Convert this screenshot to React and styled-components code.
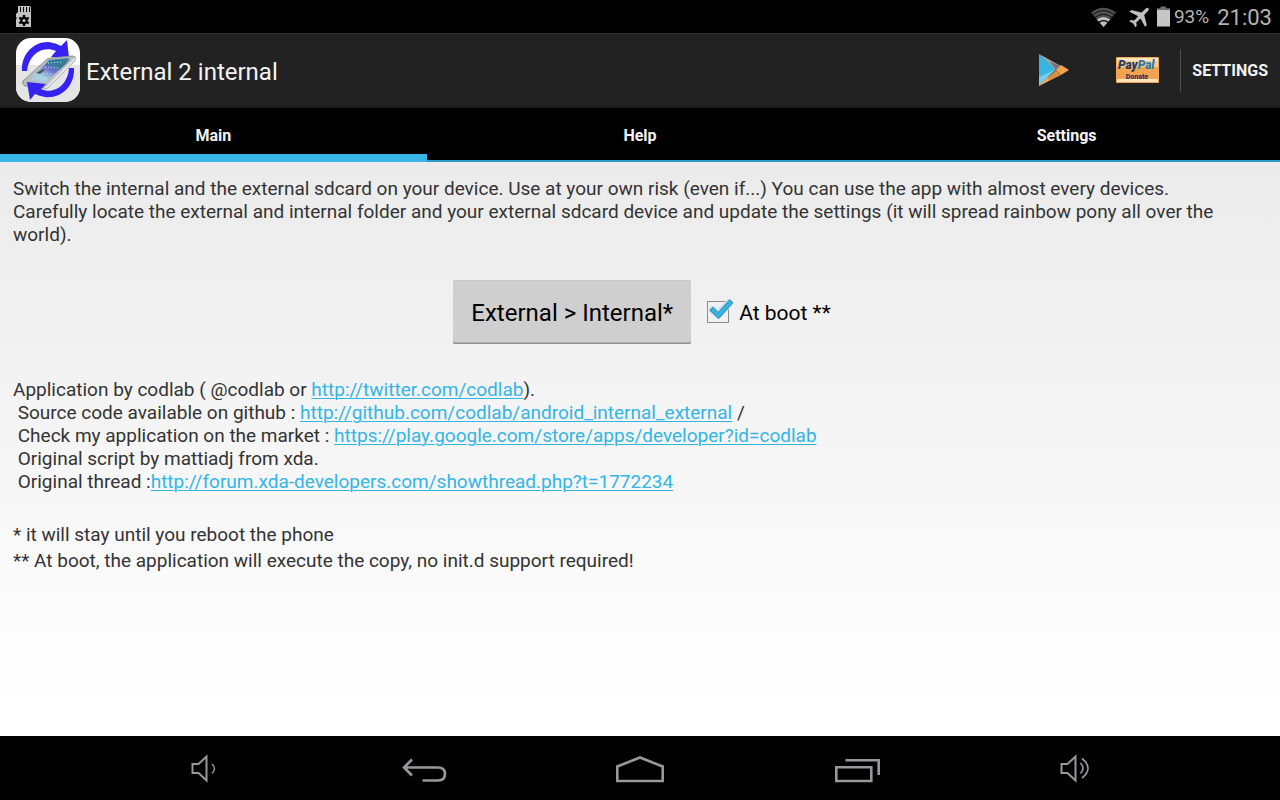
import React, { useState } from "react";
import styled, { createGlobalStyle } from "styled-components";

const GlobalStyle = createGlobalStyle`
  * { box-sizing: border-box; }
  body { margin: 0; background: #000; font-family: Roboto, "Liberation Sans", sans-serif; }
  button { font-family: inherit; border: 0; margin: 0; cursor: pointer; }
`;

const Screen = styled.div`
  display: flex;
  flex-direction: column;
  min-height: 100vh;
`;

const StatusBar = styled.header`
  display: flex;
  align-items: center;
  justify-content: space-between;
  height: 33px;
  padding: 0 8px 0 16px;
  background: #000;
  color: #b4b4b4;
`;

const StatusGroup = styled.div`
  display: flex;
  align-items: center;
`;

const Icon = styled.svg`
  display: block;
  flex: none;
`;

const Battery = styled.span`
  font-size: 19px;
  line-height: 33px;
  padding-left: 3px;
`;

const Clock = styled.time`
  font-size: 22px;
  line-height: 34px;
  padding: 2px 0 0 8px;
`;

const ActionBar = styled.div`
  display: flex;
  align-items: center;
  height: 75px;
  padding-left: 16px;
  background: #222;
  border-top: 1px solid #303030;
  border-bottom: 2px solid #1a1a1a;
`;

const Title = styled.h1`
  flex: 1;
  margin: 0;
  padding: 4px 0 0 6px;
  font-size: 24px;
  font-weight: 400;
  line-height: 32px;
  color: #f3f3f3;
`;

const Action = styled.button`
  display: flex;
  align-items: center;
  justify-content: center;
  width: 84px;
  height: 64px;
  padding: 0;
  background: none;
`;

const SettingsAction = styled.button`
  height: 43px;
  padding: 0 12px 0 11px;
  background: none;
  border-left: 1px solid #505050;
  color: #f3f3f3;
  font-size: 16px;
  font-weight: 700;
`;

const Tabs = styled.nav`
  display: grid;
  grid-template-columns: repeat(3, 1fr);
  height: 54px;
  background: #000;
`;

const Tab = styled.button`
  padding: ${(p) => (p.$active ? "9px 0 0" : "3px 0 0")};
  background: #000;
  border-bottom: ${(p) => (p.$active ? "8px solid #39b6e6" : "2px solid #2f9cc6")};
  color: #f3f3f3;
  font-size: 16px;
  font-weight: 700;
  line-height: 20px;
`;

const Content = styled.main`
  flex: 1;
  padding: 15px 13px;
  background: linear-gradient(#ebebeb, #fff 96%);
  color: #333;
  font-size: 19px;
  line-height: 23px;
`;

const Paragraph = styled.p`
  margin: 0;
`;

const Controls = styled.div`
  display: flex;
  align-items: center;
  justify-content: center;
  gap: 16px;
  padding: 34px 0 34px 4px;
`;

const SwapButton = styled.button`
  height: 64px;
  padding: 2px 18px 0;
  border-radius: 2px;
  background: #cfcfcf;
  box-shadow: inset 0 1px #c6c6c6, inset 0 -1px #8f8f8f, inset 0 -2px #b4b4b4;
  color: #000;
  font-size: 24px;
`;

const BootLabel = styled.label`
  display: flex;
  align-items: center;
  gap: 6px;
  padding-top: 2px;
  color: #000;
  font-size: 21px;
  line-height: 28px;
`;

const CheckHolder = styled.span`
  display: grid;
  width: 26px;
  height: 28px;
  & > * { grid-area: 1 / 1; }
  & > svg { pointer-events: none; z-index: 1; }
`;

const CheckInput = styled.input`
  appearance: none;
  width: 22px;
  height: 22px;
  margin: 2px 0 0;
  border: 1px solid #8c8c8c;
  background: #f1f1f1;
`;

const Credits = styled.div`
  margin: 0 0 30px;
`;

const CreditLine = styled.p`
  margin: 0;
  white-space: pre-wrap;
`;

const Link = styled.a`
  color: #33b5e5;
  text-decoration: underline;
  text-decoration-thickness: 1px;
  text-underline-offset: 2px;
`;

const Note = styled.p`
  margin: 0 0 3px;
`;

const NavBar = styled.footer`
  display: grid;
  grid-template-columns: repeat(5, 1fr);
  height: 64px;
  padding: 0 98px;
  background: #000;
`;

const NavButton = styled.button`
  display: flex;
  align-items: center;
  justify-content: center;
  padding: 0;
  background: none;
`;

function SdCardIcon() {
  return (
    <Icon width="16" height="22" viewBox="0 0 16 22">
      <path fill="#c2c2c2" d="M2 0h12l1 1v20H0V13l1-1-1-1V8l2-2z" />
      <path stroke="#000" strokeWidth="1" d="M4.500 1v5M7.500 1v5M10.500 1v5M13.500 1v5" />
      <g stroke="#000" strokeWidth="2.400">
        <path d="M8 9v11M3.300 11.800l9.400 5.400M3.300 17.200l9.400-5.400" />
      </g>
      <circle cx="8" cy="14.500" r="3.700" fill="#000" />
      <circle cx="8" cy="14.500" r="1.600" fill="#c2c2c2" />
    </Icon>
  );
}

function StatusIcons() {
  return (
    <Icon width="80" height="22" viewBox="1093 4 80 22">
      <path fill="#505050" d="M1105.500 25L1093 10.500Q1105.500 1 1118 10.500z" />
      <g fill="none" stroke="#000" strokeWidth=".8">
        <path d="M1094.500 12.800q11-8.500 22 0M1097 15.500q8.500-6.500 17 0" />
      </g>
      <path fill="#c0c0c0" d="M1105.500 25l-6.600-7.600q6.600-5 13.200 0z" />
      <path fill="none" stroke="#000" strokeWidth="1.200" d="M1100.500 20.600q5-3.800 10 0" />
      <path fill="#c0c0c0" d="M1150.500 6.200q1 1-.5 2.800l-3.800 4 2.600 10.200-1.800 1.600-4.500-8.400-4.200 4 .4 3.600-1.300 1.200-2.200-3.700-3.900-2.200 1.200-1.300 3.700.4 4-4.200-8.700-4.400 1.700-1.800 10.300 2.500 4-3.800q2-1.500 3-.5z" />
      <path fill="#707070" d="M1162.500 4.500h5.500v1.800h4V9h-13V6.300h3.500z" />
      <path fill="#c5c7c5" d="M1159 8h13v16.500h-13z" />
    </Icon>
  );
}

function AppLogo() {
  return (
    <Icon width="64" height="64" viewBox="0 0 64 64" aria-hidden="true">
      <defs>
        <linearGradient id="phone" x1="0" y1="1" x2="1" y2="0">
          <stop offset="0" stopColor="#a9bcc6" />
          <stop offset=".3" stopColor="#a5d3e2" />
          <stop offset=".55" stopColor="#6e70cf" />
          <stop offset=".75" stopColor="#2d7894" />
          <stop offset="1" stopColor="#5f7f8c" />
        </linearGradient>
      </defs>
      <rect width="64" height="64" rx="15" fill="#fff" />
      <path fill="#e5e5e5" d="M0 27h64v22a15 15 0 0 1-15 15H15A15 15 0 0 1 0 49z" />
      <path fill="#3423f1" d="M6 33C5 14 20 3 33 4q7 1 12 4l6-6 2 18-18-1 5-6C26 7 13 16 11 33z" />
      <path fill="#b9bcbe" stroke="#8c9296" strokeWidth="1" d="M7 43l23-21q2-2 5-2l22-2q4 1 2 5L33 49q-2 2-5 1l-19-2q-4-2-2-5z" />
      <path fill="#dfe1e2" d="M28 50l30-30q3 0 1 3L33 49q-2 2-5 1z" />
      <path fill="url(#phone)" d="M12 42l20-18 22-3-4 5-22 19z" />
      <path fill="#347f9f" d="M33 22l20-2-5 6-19 1z" />
      <path fill="none" stroke="#c9e6ef" strokeWidth="1" strokeDasharray="1 2" d="M16 41l12-1M22 35l14 1M29 29l15 1M32 25l15-1M25 43l9-5" />
      <path fill="#4c5960" d="M20 35l7-4 2 1-5 4z" />
      <path fill="#3423f1" d="M58 30c1 19-14 31-29 29q-6-1-10-3l-5 6-3-18 19 2-5 5c13 6 27-4 28-21z" />
    </Icon>
  );
}

function PlayIcon() {
  return (
    <Icon width="32" height="34" viewBox="0 0 32 34" aria-hidden="true">
      <path fill="#39b3e2" d="M1 1v32l17-17z" />
      <path fill="#76cbe8" d="M1 24v9l17-17z" />
      <path fill="#a5aaae" d="M1 1l22 12-5 4z" />
      <path fill="#777" d="M11 8l12 5-5 4z" />
      <path fill="#f5a34e" d="M23 12l8 5-8 5-5-5z" />
      <path fill="#d78e45" d="M1 33l17-16 5 5z" />
      <path fill="#f4a953" d="M1 33l8-8 3 2z" />
    </Icon>
  );
}

function DonateIcon() {
  return (
    <Icon width="44" height="26" viewBox="0 0 44 26">
      <rect width="43" height="26" rx="1" fill="#f3a451" />
      <path fill="#fbe3bc" d="M1 1h41v3H1zM1 22h41v3H1z" />
      <path fill="#f8cb94" d="M1 4h41v6H1z" />
      <text x="2" y="12" fontSize="12" fontWeight="900" fontStyle="italic" fontFamily="Roboto, sans-serif" fill="#253b64">
        Pay<tspan fill="#287ba5">Pal</tspan>
      </text>
      <text x="21" y="22" textAnchor="middle" fontSize="7" fontWeight="900" fontFamily="Roboto, sans-serif" fill="#293657">
        Donate
      </text>
    </Icon>
  );
}

const navIcons = [
  {
    label: "Volume down",
    body: (
      <g strokeWidth="2">
        <path d="M18.500 28h6l8-7.500v24L24.500 37h-6z" />
        <path strokeWidth="1.500" d="M38 28q5 4.500 0 9.500" />
      </g>
    ),
  },
  {
    label: "Back",
    body: <path strokeWidth="2.600" d="M21 23.500l-8 8 8 8M13 31.500h34q7 0 7 6.500t-7 6.500H31.500" />,
  },
  {
    label: "Home",
    body: <path strokeWidth="2.600" d="M9.300 45V30.500L32 21.500l22.700 9V45z" />,
  },
  {
    label: "Recent apps",
    body: <path strokeWidth="2.600" d="M11.300 31.300h35V45h-35zM20.500 24.300h33.200V39" />,
  },
  {
    label: "Volume up",
    body: (
      <g strokeWidth="2">
        <path d="M19.500 28h6l8-7.500v24L25.500 37h-6z" />
        <path strokeWidth="1.700" d="M38.500 27q5 5 0 10.500M40 22.500q12 9.500 0 19.500" />
      </g>
    ),
  },
];

const credits = [
  { before: "Application by codlab ( @codlab or ", url: "http://twitter.com/codlab", after: ")." },
  { before: " Source code available on github : ", url: "http://github.com/codlab/android_internal_external", after: " /" },
  { before: " Check my application on the market : ", url: "https://play.google.com/store/apps/developer?id=codlab" },
  { before: " Original script by mattiadj from xda." },
  { before: " Original thread :", url: "http://forum.xda-developers.com/showthread.php?t=1772234" },
];

export default function App() {
  const [active, setActive] = useState("Main");
  const [boot, setBoot] = useState(true);

  return (
    <Screen>
      <GlobalStyle />
      <StatusBar>
        <SdCardIcon />
        <StatusGroup>
          <StatusIcons />
          <Battery>93%</Battery>
          <Clock>21:03</Clock>
        </StatusGroup>
      </StatusBar>
      <ActionBar>
        <AppLogo />
        <Title>External 2 internal</Title>
        <Action aria-label="Play store"><PlayIcon /></Action>
        <Action aria-label="PayPal Donate"><DonateIcon /></Action>
        <SettingsAction>SETTINGS</SettingsAction>
      </ActionBar>
      <Tabs>
        {["Main", "Help", "Settings"].map((name) => (
          <Tab key={name} $active={active === name} onClick={() => setActive(name)}>
            {name}
          </Tab>
        ))}
      </Tabs>
      <Content>
        <Paragraph>
          Switch the internal and the external sdcard on your device. Use at your own risk (even if...) You can use
          the app with almost every devices.
          <br />
          Carefully locate the external and internal folder and your external sdcard device and update the settings
          (it will spread rainbow pony all over the
          <br />
          world).
        </Paragraph>
        <Controls>
          <SwapButton>External &gt; Internal*</SwapButton>
          <BootLabel>
            <CheckHolder>
              <CheckInput type="checkbox" checked={boot} onChange={(e) => setBoot(e.target.checked)} />
              {boot && (
                <Icon width="28" height="28" viewBox="0 0 28 28">
                  <path fill="none" stroke="#c5e5f3" strokeWidth="8" strokeLinejoin="round" strokeLinecap="round" d="M6 11l5 5L22 4" />
                  <path fill="none" stroke="#3c7f9c" strokeWidth="5" d="M4 9.500l7.500 7L24.500 2" />
                  <path fill="none" stroke="#33b5e5" strokeWidth="3.600" d="M4.500 10l7 6.500L24 2.500" />
                </Icon>
              )}
            </CheckHolder>
            At boot **
          </BootLabel>
        </Controls>
        <Credits>
          {credits.map(({ before, url, after }) => (
            <CreditLine key={before}>
              {before}
              {url && <Link href={url}>{url}</Link>}
              {after}
            </CreditLine>
          ))}
        </Credits>
        <Note>* it will stay until you reboot the phone</Note>
        <Note>** At boot, the application will execute the copy, no init.d support required!</Note>
      </Content>
      <NavBar>
        {navIcons.map(({ label, body }) => (
          <NavButton key={label} aria-label={label}>
            <Icon width="64" height="64" viewBox="0 0 64 64" fill="none" stroke="#98989b">
              {body}
            </Icon>
          </NavButton>
        ))}
      </NavBar>
    </Screen>
  );
}
